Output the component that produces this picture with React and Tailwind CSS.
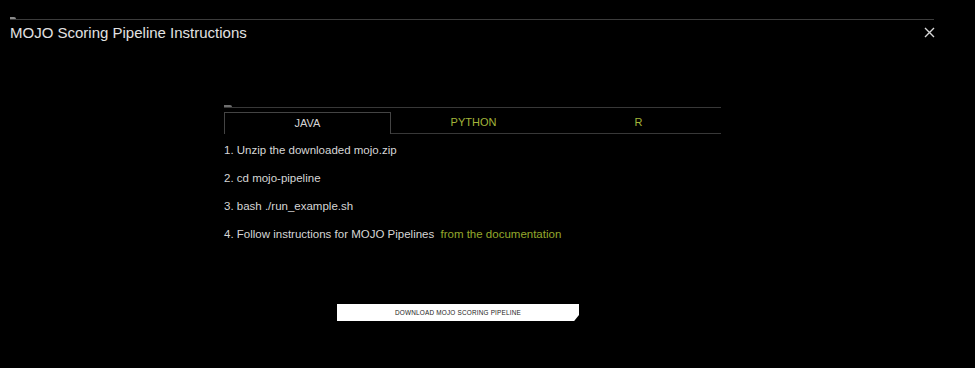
import React, { useState } from 'react';

const steps = [
  '1. Unzip the downloaded mojo.zip',
  '2. cd mojo-pipeline',
  '3. bash ./run_example.sh',
];

const tabs = ['JAVA', 'PYTHON', 'R'];

const App = () => {
  const [active, setActive] = useState('JAVA');

  return (
    <div
      className="w-[975px] h-[368px] bg-black text-[#d6d6d6] overflow-hidden"
      style={{ fontFamily: '"Liberation Sans", Arial, sans-serif' }}
    >
      <div className="pt-[17px] pl-[10px] pr-[41px]">
        {/* top rule */}
        <div className="w-[6px] h-[2px] bg-[#8a8a8a] rounded-tr-[2px]" />
        <div className="h-px bg-[#3c3c3c]" />

        {/* header */}
        <div className="flex items-center justify-between h-[23px] mt-[1px]">
          <h1 className="text-[15px] leading-none text-[#e2e2e2]">
            MOJO Scoring Pipeline Instructions
          </h1>
          <button className="text-[#d8d8d8] -mr-[1px]">
            <svg width="11" height="11" viewBox="0 0 11 11">
              <path d="M1 1L10 10M10 1L1 10" stroke="currentColor" strokeWidth="1.4" />
            </svg>
          </button>
        </div>

        {/* content */}
        <div className="w-[497px] ml-[214px] mt-[61px]">
          <div className="w-[8px] h-[2px] bg-[#6e6e6e] rounded-tr-[2px]" />
          <div className="h-px bg-[#383838]" />

          <div className="flex mt-[4px] h-[22px]">
            {tabs.map((t) => (
              <button
                key={t}
                onClick={() => setActive(t)}
                className={`flex-1 flex items-center justify-center text-[11px] ${
                  active === t
                    ? 'border-l border-t border-r border-[#444] text-[#d4d4d4]'
                    : 'border-b border-[#383838] text-[#a3b53a]'
                }`}
              >
                {t}
              </button>
            ))}
          </div>

          <div className="flex flex-col gap-[14px] mt-[9px] text-[11.5px] leading-[14px]">
            {steps.map((s) => (
              <div key={s}>{s}</div>
            ))}
            <div>
              4. Follow instructions for MOJO Pipelines{' '}
              <a className="ml-[3px] text-[#94a82c]">from the documentation</a>
            </div>
          </div>

          <button
            className="mt-[63px] ml-[113px] w-[242px] h-[17px] bg-white text-[#222] text-[6.4px] tracking-[0.2px] flex items-center justify-center"
            style={{ clipPath: 'polygon(0 0, 100% 0, 100% 65%, 98% 100%, 0 100%)' }}
          >
            DOWNLOAD MOJO SCORING PIPELINE
          </button>
        </div>
      </div>
    </div>
  );
};

export default App;
